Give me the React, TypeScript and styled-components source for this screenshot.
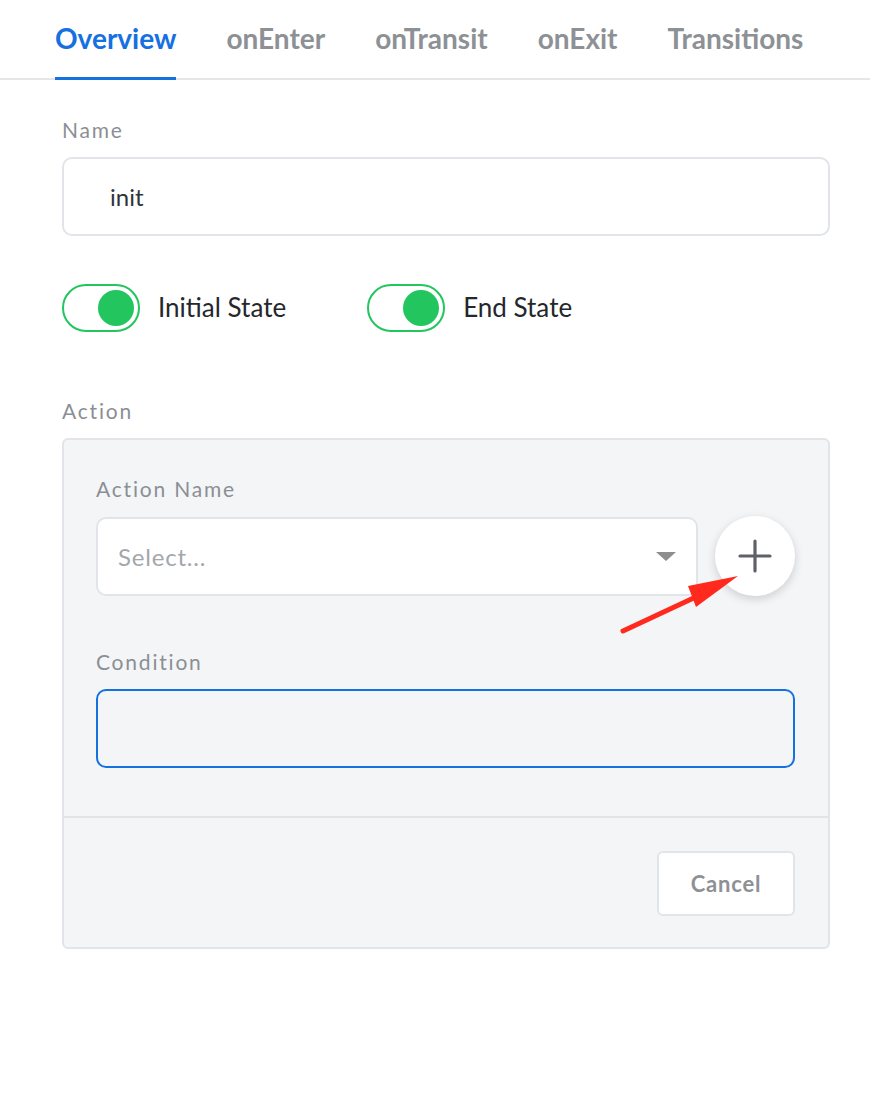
import React from "react";
import styled, { createGlobalStyle } from "styled-components";

const Global = createGlobalStyle`
  html, body { margin: 0; padding: 0; background: #ffffff; }
  body { font-family: Lato, "Open Sans", sans-serif; }
  * { box-sizing: border-box; }
`;

const Page = styled.div`
  width: 870px;
  height: 1110px;
  background: #fff;
  position: relative;
`;

const TabBar = styled.div`
  display: flex;
  gap: 50px;
  padding-left: 55px;
  height: 80px;
  border-bottom: 2px solid #e4e7ea;
`;

const Tab = styled.div<{ $active?: boolean }>`
  font-size: 28px;
  font-weight: 700;
  color: ${(p) => (p.$active ? "#1570e0" : "#8d9196")};
  padding-top: 21px;
  height: 80px;
  border-bottom: 3px solid ${(p) => (p.$active ? "#1570e0" : "transparent")};
  margin-bottom: -2px;
  letter-spacing: 0px;
`;

const Body = styled.div`
  padding: 0 40px 0 62px;
  display: flex;
  flex-direction: column;
`;

const Label = styled.div`
  font-size: 21px;
  letter-spacing: 1.8px;
  color: #8a8f95;
  line-height: 26px;
  margin-bottom: 14px;
`;

const TextBox = styled.div<{ $focus?: boolean; $bg?: string; $indent?: number }>`
  height: 79px;
  border: 2px solid ${(p) => (p.$focus ? "#1570e0" : "#e1e4e8")};
  border-radius: 10px;
  background: ${(p) => p.$bg || "#fff"};
  display: flex;
  align-items: center;
  padding: 0 20px 0 ${(p) => p.$indent ?? 20}px;
  font-size: 24px;
  color: #30343a;
`;

const NameSection = styled.div`
  padding-top: 37px;
`;

const ToggleRow = styled.div`
  display: flex;
  gap: 81px;
  margin-top: 48px;
`;

const ToggleItem = styled.div`
  display: flex;
  align-items: center;
  gap: 18px;
  font-size: 26px;
  color: #24272c;
  padding-bottom: 3px;
`;

const Track = styled.div`
  width: 78px;
  height: 48px;
  border: 2px solid #22c55e;
  border-radius: 24px;
  display: flex;
  align-items: center;
  justify-content: flex-end;
  padding-right: 4px;
  margin-bottom: -3px;
`;

const Knob = styled.div`
  width: 36px;
  height: 36px;
  border-radius: 50%;
  background: #22c55e;
`;

const ActionSection = styled.div`
  margin-top: 66px;
`;

const Panel = styled.div`
  background: #f4f5f7;
  border: 2px solid #e1e4e8;
  border-radius: 6px;
  height: 511px;
  display: flex;
  flex-direction: column;
`;

const PanelMain = styled.div`
  padding: 36px 33px 0 32px;
  height: 378px;
  border-bottom: 2px solid #e1e4e8;
  display: flex;
  flex-direction: column;
`;

const SelectRow = styled.div`
  display: flex;
  align-items: center;
  gap: 17px;
`;

const Select = styled(TextBox)`
  flex: 1;
  justify-content: space-between;
  color: #a3a7ab;
  font-size: 24px;
  letter-spacing: 0.8px;
`;

const Caret = styled.div`
  width: 0;
  height: 0;
  border-left: 10px solid transparent;
  border-right: 10px solid transparent;
  border-top: 9px solid #8e8e8e;
`;

const PlusButton = styled.div`
  width: 80px;
  height: 80px;
  border-radius: 50%;
  background: #fff;
  box-shadow: 0 3px 10px rgba(0, 0, 0, 0.16);
  display: flex;
  align-items: center;
  justify-content: center;
  flex-shrink: 0;
`;

const ConditionSection = styled.div`
  margin-top: 53px;
`;

const PanelFooter = styled.div`
  flex: 1;
  display: flex;
  justify-content: flex-end;
  align-items: flex-start;
  padding: 33px 33px 0 0;
`;

const CancelButton = styled.div`
  width: 138px;
  height: 65px;
  background: #fff;
  border: 2px solid #e1e4e8;
  border-radius: 6px;
  display: flex;
  align-items: center;
  justify-content: center;
  font-size: 22px;
  letter-spacing: 0.8px;
  font-weight: 700;
  color: #8d9196;
`;

const Arrow = styled.svg`
  position: absolute;
  left: 0;
  top: 0;
  pointer-events: none;
`;

export default function App() {
  return (
    <Page>
      <Global />
      <TabBar>
        <Tab $active>Overview</Tab>
        <Tab>onEnter</Tab>
        <Tab>onTransit</Tab>
        <Tab>onExit</Tab>
        <Tab>Transitions</Tab>
      </TabBar>
      <Body>
        <NameSection>
          <Label>Name</Label>
          <TextBox $indent={46}>init</TextBox>
        </NameSection>
        <ToggleRow>
          <ToggleItem>
            <Track>
              <Knob />
            </Track>
            Initial State
          </ToggleItem>
          <ToggleItem>
            <Track>
              <Knob />
            </Track>
            End State
          </ToggleItem>
        </ToggleRow>
        <ActionSection>
          <Label>Action</Label>
          <Panel>
            <PanelMain>
              <Label>Action Name</Label>
              <SelectRow>
                <Select>
                  Select...
                  <Caret />
                </Select>
                <PlusButton>
                  <svg width="34" height="34" viewBox="0 0 34 34">
                    <path d="M17 2 V32 M2 17 H32" stroke="#5f6166" strokeWidth="3.2" strokeLinecap="round" />
                  </svg>
                </PlusButton>
              </SelectRow>
              <ConditionSection>
                <Label>Condition</Label>
                <TextBox $focus $bg="#f4f5f7" />
              </ConditionSection>
            </PanelMain>
            <PanelFooter>
              <CancelButton>Cancel</CancelButton>
            </PanelFooter>
          </Panel>
        </ActionSection>
      </Body>
      <Arrow width="870" height="1110" viewBox="0 0 870 1110">
        <line x1="623" y1="631" x2="700" y2="595" stroke="#ff2a1d" strokeWidth="5" strokeLinecap="round" />
        <polygon points="738,576 688,586 696,607" fill="#ff2a1d" />
      </Arrow>
    </Page>
  );
}
